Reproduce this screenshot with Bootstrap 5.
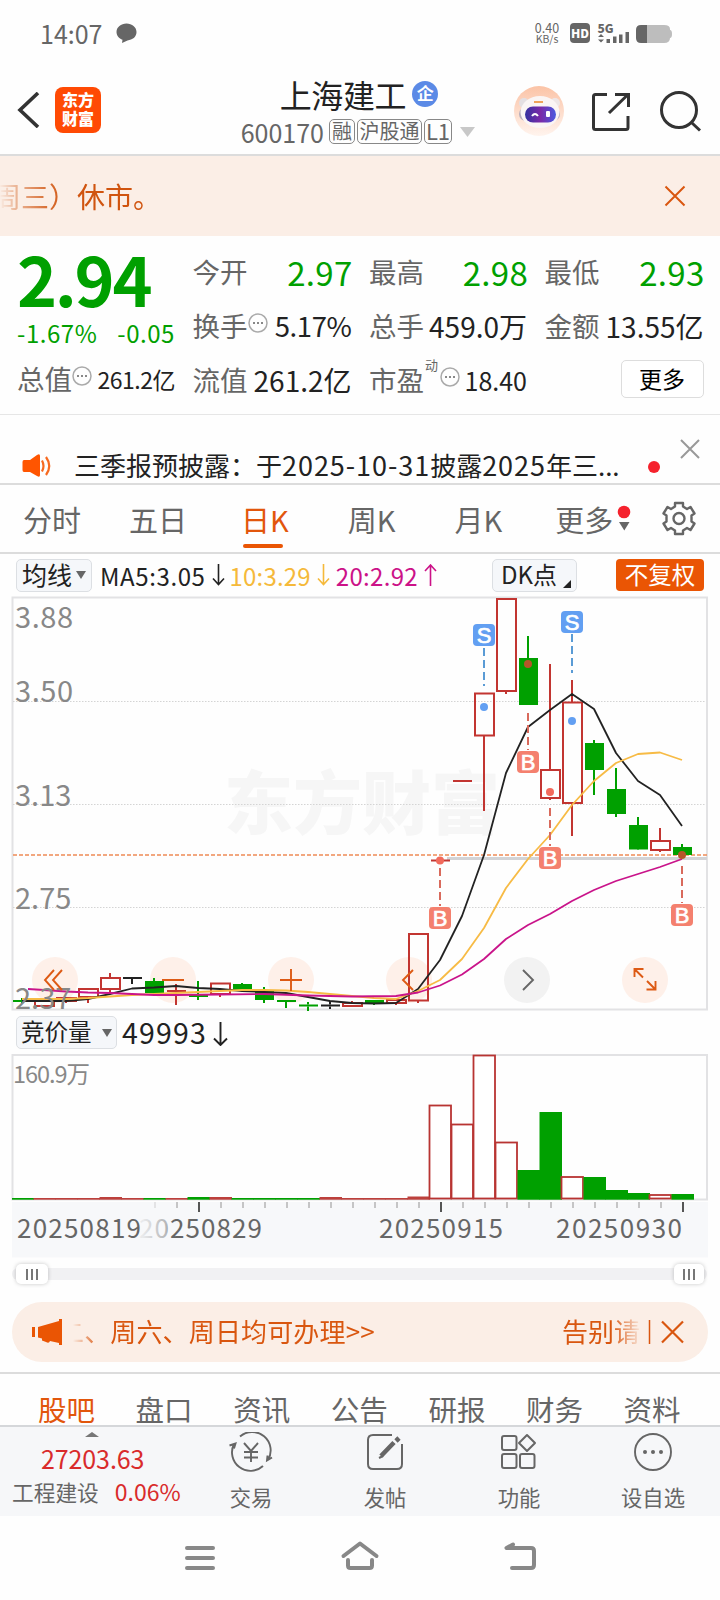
<!DOCTYPE html>
<html lang="zh-CN">
<head>
<meta charset="utf-8">
<meta name="viewport" content="width=device-width, initial-scale=1">
<title>上海建工 600170</title>
<link href="https://cdn.jsdelivr.net/npm/bootstrap@5.3.0/dist/css/bootstrap.min.css" rel="stylesheet">
<style>
body{font-family:"Noto Sans CJK SC",sans-serif;color:#222;width:720px;height:1600px;overflow:hidden;background:#fefefe;line-height:1;font-size:28px}
svg{display:block;flex:none}
svg text{font-family:"Noto Sans CJK SC",sans-serif}
.nw{white-space:nowrap}
.statusbar{height:66px;padding:0 40px 0 40px;color:#666;font-size:25px}
.speed{font-size:12.5px;line-height:11px;width:28px;text-align:center}
.speed div:last-child{font-size:10.5px}
.topbar{height:90px;border-bottom:2px solid #dcdcdc;padding:0 18px 0 17px}
.applogo{width:46px;height:46px;border-radius:8px;background:#ff4a04;color:#fff;font-size:16px;font-weight:900;line-height:19px;margin-left:15px;text-align:center;padding-top:3px}
.stockname{font-size:32px;line-height:36px;letter-spacing:-.4px}
.qi{width:26px;height:26px;border-radius:50%;background:#5b8ae6;color:#fff;font-size:17px;font-weight:700;line-height:24px;text-align:center}
.code{font-size:25px;color:#666;line-height:26px}
.chip{border:1.5px solid #888;border-radius:5px;height:25px;color:#666;font-size:20px;line-height:21px;text-align:center}
.notice{height:80px;background:#fbeee6;color:#d0540f}
.notice .msg{font-size:28px;line-height:40px;margin-left:-7px;-webkit-mask-image:linear-gradient(90deg,transparent 6px,rgba(0,0,0,.35) 22px,rgba(0,0,0,.8) 52px,#000 76px)}
.quote{height:179px;border-bottom:1px solid #e6e6e6;grid-template-columns:158px 159px 158px 159px;column-gap:17.5px;padding:9px 16px 0 17px;display:grid;align-content:start}
.up{color:#d92b2b}.down{color:#00a000}
.price{font-size:68px;font-weight:700;line-height:72px;height:72px;letter-spacing:-2.3px;margin-top:-3px}
.chg{font-size:24px;letter-spacing:.55px;height:38px;padding-left:0}
.lab{color:#666;font-size:27.5px}
.qc{height:54px;display:flex;align-items:center;white-space:nowrap}
.qc>:last-child{margin-left:auto}
.qc>svg{margin-top:-6px}
.v33{font-size:33px;letter-spacing:.3px;margin-right:-1px}
.morebtn{width:83px;height:38px;border:1.5px solid #ddd;border-radius:5px;font-size:23px;margin:-3px 0 0 auto;line-height:31px;text-align:center;background:#fff}
.news{height:70px;border-bottom:2px solid #dcdcdc;font-size:26px;padding-left:22px}
.news .lat{font-size:27px;letter-spacing:.95px}
.dot{width:12px;height:12px;border-radius:50%;background:#f5222d}
.tabs{height:69px;border-bottom:2px solid #dcdcdc;font-size:29px;color:#666;padding-top:1px}
.tabs .it{position:relative}
.tabs .act,.subtabs .act{color:#e2560c}
.tabs .act:after{content:"";position:absolute;left:2px;width:40px;height:4px;border-radius:2px;background:#ea5504;top:39px}
.marow{height:42px;font-size:24px}
.ma{letter-spacing:.6px;padding-top:1px}
.pillbtn{height:33px;border:1.5px solid #dcdfe3;border-radius:5px;background:#f5f7fa;display:flex;align-items:center;white-space:nowrap}
.gold{color:#f5b93a}.mag{color:#cc1288}
.adj{background:#ea5504;color:#fff;width:88px;height:32px;border-radius:4px;text-align:center;line-height:30px;font-size:23.5px}
.promo{height:60px;margin:0 12px;border-radius:30px;background:#fbeee6;color:#d9560f;font-size:26px}
.promo span{line-height:38px;margin-top:-2px}
.fl{-webkit-mask-image:linear-gradient(90deg,transparent 15px,#000 42px)}
.fr{-webkit-mask-image:linear-gradient(90deg,#000 50px,transparent 80px)}
.slider{height:12px;margin:9px 13px 22px 12px;background:#f1f1f3;border-radius:6px;padding:0 3px 0 4px}
.thumb{width:32px;height:20px;background:#fff;border-radius:5px;box-shadow:0 0 4px rgba(0,0,0,.22);display:flex;justify-content:center;align-items:center;gap:3.4px}
.thumb i{width:2px;height:11px;background:#777}
.subtabs{height:55px;border-top:2px solid #dcdcdc;border-bottom:2px solid #d5d7da;overflow:hidden;font-size:28.5px;color:#666;padding:20px 0 0 38px}
.subtabs span{width:97.6px;flex:none;line-height:30px}
.dock{height:89px;background:#f6f7f9;color:#666;font-size:21.3px}
.dock .act{width:134px;padding-top:5px;text-align:center}
.dock .act svg{margin:0 auto 14px}
</style>
</head>
<body>
<header class="statusbar d-flex align-items-center">
 <span>14:07</span>
 <svg style="margin-left:14px" width="21" height="20" viewBox="0 0 21 20"><path d="M10.500 .5c5.500 0 10 3.600 10 8.500s-4 8-9 8.400L6 20l.500-3.200C3 15.500.5 12.500.5 9c0-4.900 4.500-8.500 10-8.500z" fill="#666"/></svg>
 <div class="ms-auto speed"><div>0.40</div><div>KB/s</div></div>
 <svg style="margin-left:7px" width="112" height="22" viewBox="568 22 112 22">
  <rect x="570" y="23" width="20" height="20" rx="4" fill="#666"/><text x="580" y="37.500" font-size="12" font-weight="900" text-anchor="middle" fill="#fff">HD</text>
  <text x="597.500" y="32.500" font-size="12" font-weight="900" fill="#666">5G</text>
  <path d="M601 34l3 3h-6zM601 42.500l3-3h-6z" fill="#666"/>
  <path d="M606.500 39h3.500v4h-3.500zM613 36.500h3.500v6.500H613zM619 34.500h3.500v8.500H619zM625.500 32h3.500v11h-3.500z" fill="#666"/>
  <path d="M642 25h22q6 0 6 4v1q2 0 2 4t-2 4q0 5-6 5h-22z" fill="#bdbdbd"/><path d="M647 25v18h-6q-5 0-5-5v-8q0-5 5-5z" fill="#666"/></svg>
</header>

<nav class="topbar d-flex align-items-center">
 <svg width="23" height="36" viewBox="0 0 23 36"><path d="M21 1L3 18l18 17" fill="none" stroke="#333" stroke-width="3.600"/></svg>
 <div class="applogo">东方<br>财富</div>
 <div class="ms-auto">
  <div class="d-flex align-items-center" style="margin-left:39px"><span class="stockname">上海建工</span><span class="qi" style="margin-left:6px">企</span></div>
  <div class="d-flex align-items-center code" style="margin-top:7px">600170<span class="chip" style="width:26px;margin-left:5px">融</span><span class="chip" style="width:65px;margin-left:2px">沪股通</span><span class="chip" style="width:28px;margin-left:2px;font-size:22px">L1</span>
  <svg style="margin-left:8px" width="15" height="10"><path d="M0 0h15L7.500 10z" fill="#c8c8c8"/></svg></div>
 </div>
 <svg style="margin-left:37px" width="190" height="52" viewBox="512 83 190 52" fill="none" stroke="#333" stroke-width="3">
  <defs><linearGradient id="gb" x1="0" y1="0" x2="0" y2="1"><stop offset="0" stop-color="#fbc3a6"/><stop offset="1" stop-color="#fff4ee"/></linearGradient><linearGradient id="gv"><stop offset="0" stop-color="#3432a0"/><stop offset=".5" stop-color="#7a2aa8"/><stop offset="1" stop-color="#4a5be0"/></linearGradient></defs>
  <g stroke="none"><circle cx="539" cy="110" r="25" fill="url(#gb)"/><circle cx="524" cy="102" r="5" fill="#e4dfe2"/><circle cx="555" cy="102" r="5" fill="#eee6e6"/><rect x="519" y="106" width="41" height="14" rx="7" fill="#b6aebc"/><ellipse cx="540" cy="111" rx="19.500" ry="16" fill="#faf5f4"/><rect x="525" y="105.500" width="31" height="16" rx="8" fill="url(#gv)"/><path d="M534 101h9" stroke="#f0a35a" stroke-width="2"/><path d="M532 115q3-4 6 0" stroke="#fff" stroke-width="2" fill="none"/><rect x="546" y="110" width="4" height="6" rx="1" fill="#fff"/></g>
  <path d="M607 93.500h-11.500q-2 0-2 2v31q0 2 2 2H626q2 0 2-2V115M609 112l19-18.500M615 93.500h13.500V106"/>
  <circle cx="679" cy="109" r="17.500"/><path d="M691 121l9 8.500"/></svg>
</nav>

<div class="notice d-flex align-items-center">
 <span class="msg nw">周三）休市。</span>
 <svg class="ms-auto" style="margin-right:34px" width="22" height="22"><path d="M1.500 1.500l19 19M20.500 1.500l-19 19" stroke="#d9560f" stroke-width="2"/></svg>
</div>

<section class="quote">
 <div>
  <div class="price down">2.94</div>
  <div class="chg down d-flex justify-content-between align-items-center"><span>-1.67%</span><span>-0.05</span></div>
  <div class="qc"><span class="lab">总值</span><svg width="20" height="20" viewBox="0 0 20 20"><circle cx="10" cy="10" r="9" fill="none" stroke="#aaa" stroke-width="1.500"/><path d="M5 10h2M9 10h2M13 10h2" stroke="#888" stroke-width="2"/></svg><span style="font-size:23px;letter-spacing:-.5px">261.2亿</span></div>
 </div>
 <div>
  <div class="qc"><span class="lab">今开</span><span class="v33 down">2.97</span></div>
  <div class="qc"><span class="lab">换手</span><svg width="20" height="20" viewBox="0 0 20 20"><circle cx="10" cy="10" r="9" fill="none" stroke="#aaa" stroke-width="1.500"/><path d="M5 10h2M9 10h2M13 10h2" stroke="#888" stroke-width="2"/></svg><span style="font-size:27.5px;letter-spacing:-.4px">5.17%</span></div>
  <div class="qc"><span class="lab">流值</span><span>261.2亿</span></div>
 </div>
 <div>
  <div class="qc"><span class="lab">最高</span><span class="v33 down">2.98</span></div>
  <div class="qc"><span class="lab">总手</span><span>459.0万</span></div>
  <div class="qc"><span class="lab">市盈</span><span class="lab align-self-start" style="font-size:13px;margin-left:1px;margin-top:5px">动</span><svg style="margin-left:2px" width="20" height="20" viewBox="0 0 20 20"><circle cx="10" cy="10" r="9" fill="none" stroke="#aaa" stroke-width="1.500"/><path d="M5 10h2M9 10h2M13 10h2" stroke="#888" stroke-width="2"/></svg><span style="font-size:25px">18.40</span></div>
 </div>
 <div>
  <div class="qc"><span class="lab">最低</span><span class="v33 down">2.93</span></div>
  <div class="qc"><span class="lab">金额</span><span>13.55亿</span></div>
  <div class="qc"><button class="morebtn p-0">更多</button></div>
 </div>
</section>

<div class="news d-flex">
 <svg style="margin-top:39px" width="30" height="24" viewBox="22 454 30 24"><path d="M24 460h6l7-5q3-2 3 1v19q0 3-3 1l-7-4h-6q-1.500 0-1.500-2v-8q0-2 1.500-2z" fill="#ff5500"/><path d="M42 460.500q3 5.500 0 11M46 457q6.500 9 0 18" fill="none" stroke="#f76a20" stroke-width="2.200"/></svg>
 <span class="nw" style="margin:36px 0 0 22px">三季报预披露：于<span class="lat">2025-10-31</span>披露<span class="lat">2025</span>年三...</span>
 <div class="dot ms-auto" style="margin-top:46px"></div>
 <svg style="margin:24px 20px 0 20px" width="20" height="20"><path d="M1 1l18 18M19 1L1 19" stroke="#999" stroke-width="2"/></svg>
</div>

<nav class="tabs d-flex align-items-center nw">
 <span class="it" style="margin-left:23px">分时</span><span class="it" style="margin-left:48px">五日</span><span class="it act" style="margin-left:54px">日K</span><span class="it" style="margin-left:59px">周K</span><span class="it" style="margin-left:59px">月K</span><span class="it" style="margin-left:53px">更多</span>
 <svg style="margin-left:4px" width="14" height="28" viewBox="617 498 14 28"><circle cx="624" cy="505" r="6.300" fill="#f5222d"/><path d="M619 515h10.500l-5.200 8.500z" fill="#666"/></svg>
 <svg style="margin-left:30px" width="36" height="36" viewBox="-18 -17.500 36 36" fill="none" stroke="#666" stroke-width="2.400" stroke-linejoin="round"><path d="M-4-15.500H4V-12L8-9.500L11.500-11.500L15.500-5L12.500-3V3L15.500 5L11.500 11.500L8 9.500L4 12V15.500H-4V12L-8 9.500L-11.500 11.500L-15.500 5L-12.500 3V-3L-15.500-5L-11.500-11.500L-8-9.500L-4-12z"/><circle r="5.500"/></svg>
</nav>

<div class="marow d-flex align-items-center nw ps-3">
 <div class="pillbtn" style="width:76px;padding-left:5px;font-size:25px"><span style="margin-top:-2px">均线</span><svg class="ms-1" width="10" height="8"><path d="M0 0h10L5 8z" fill="#666"/></svg></div>
 <span class="ma" style="margin-left:8px">MA5:3.05</span>
 <svg style="margin-left:6px" width="13" height="22" viewBox="0 0 13 22"><path d="M6.500 0v20M1 14.500l5.500 6 5.500-6" fill="none" stroke="#222" stroke-width="1.600"/></svg>
 <span class="gold ma" style="margin-left:5px;letter-spacing:.2px">10:3.29</span>
 <svg style="margin-left:6px" width="13" height="22" viewBox="0 0 13 22"><path d="M6.500 0v20M1 14.500l5.500 6 5.500-6" fill="none" stroke="#f5b93a" stroke-width="1.600"/></svg>
 <span class="mag ma" style="margin-left:6px;letter-spacing:.3px">20:2.92</span>
 <svg style="margin-left:6px" width="13" height="22" viewBox="0 0 13 22"><path d="M6.500 22V1M1 7l5.500-6 5.500 6" fill="none" stroke="#cc1288" stroke-width="1.600"/></svg>
 <div class="ms-auto pillbtn" style="width:85px;padding-left:8px"><span style="margin-top:-2px">DK点</span><svg class="align-self-end" style="margin:0 0 3px 6px" width="8" height="8"><path d="M8 0v8H0z" fill="#222"/></svg></div>
 <div class="adj" style="margin:0 16px 0 39px">不复权</div>
</div>

<svg id="kline" width="720" height="416" viewBox="0 596 720 416">
 <text x="224" y="829" font-size="69" font-weight="900" fill="#f6f6f6">东方财富</text>
 <path d="M12.500 1009.500V597.500H707V1009.500z" fill="none" stroke="#e2e2e4" stroke-width="2"/>
 <path d="M13 701.500H706M13 804.500H706M13 907.500H706" stroke="#d4d4d4" stroke-dasharray="1.500 1.500"/>
 <g fill="#fef0e9"><circle cx="55" cy="980" r="23"/><circle cx="173" cy="980" r="23"/><circle cx="291" cy="980" r="23"/><circle cx="409" cy="980" r="23"/><circle cx="645" cy="980" r="23"/><circle cx="527" cy="980" r="23" fill="#f2f2f2"/></g>
 <g font-size="29" fill="#888"><text x="15" y="627.500" textLength="58">3.88</text><text x="15" y="702" textLength="58">3.50</text><text x="15" y="806">3.13</text><text x="15" y="909">2.75</text></g>
 <path d="M447 858.500H707" stroke="#d2d3d6" stroke-width="3"/><path d="M13 855H707" stroke="#ee8a55" stroke-width="1.500" stroke-dasharray="4 2"/>
 <g id="candles"></g>
 <g fill="none" stroke-width="1.800" stroke-linejoin="round">
 <polyline stroke="#222" points="22,1001 66,1001 88,999 110,994 132,988.500 154,987.500 176,986 198,988 220,989 242,991 264,992 286,993 308,997 330,1001 352,1003 374,1003.500 396,1003 418,989 440,960 462,916 484,855 506,773 528,727 550,710 572,694 594,709 616,753 638,781 660,795 682,826"/>
 <polyline stroke="#f7bb45" points="22,999 66,999 88,998 110,996.500 132,995 154,994 198,992 242,990 264,990 286,990.500 308,992 330,994 352,996 374,998 396,999 418,991 440,980 462,959 484,928 506,888 528,859 550,835 572,805 594,781 616,763 638,754 660,752.500 682,760"/>
 <polyline stroke="#c9148a" points="28,989 44,990 66,991.500 88,992.500 110,993 132,994 154,995 176,995 220,994.500 264,994 308,995.500 352,996.500 396,996 418,992.500 440,985.500 462,974.500 484,959 506,939 528,925 550,914 572,901 594,890 616,881 638,874 660,867 682,859"/>
 </g>
 <text x="15" y="1008.500" font-size="29" fill="#888">2.37</text>
 <g id="marks"></g>
 <g fill="none" stroke="#dd5a14" stroke-width="1.900"><path d="M54 970l-9 10 9 10M62 970l-9 10 9 10M162 980h22M280 980h22M291 969v22M413 970l-10 10 10 10M634.500 977v-8h9M635 969.500l8 8M655.500 981v8.500h-9M655 989l-8-8"/><path stroke="#666" d="M523 970l10 10-10 10"/></g>
</svg>

<div class="d-flex align-items-center nw ps-3" style="height:41px;font-size:28.500px">
 <div class="pillbtn" style="width:101px;padding-left:4px;font-size:23.500px"><span style="margin-top:-2px">竞价量</span><svg style="margin-left:10px" width="10" height="8"><path d="M0 0h10L5 8z" fill="#666"/></svg></div>
 <span style="margin:-1px 0 0 5px;letter-spacing:1.200px">49993</span>
 <svg style="margin:2px 0 0 6px" width="15" height="24" viewBox="0 0 15 24"><path d="M7.500 0v23M1 16.500l6.500 6.500 6.500-6.500" fill="none" stroke="#222" stroke-width="1.900"/></svg>
</div>

<svg width="720" height="206" viewBox="0 1053 720 206">
 <defs><linearGradient id="fade" gradientUnits="userSpaceOnUse" x1="143" x2="182" y1="0" y2="0"><stop offset="0" stop-color="#666" stop-opacity=".1"/><stop offset=".6" stop-color="#666" stop-opacity=".45"/><stop offset=".7" stop-color="#666"/></linearGradient></defs>
 <rect x="12" y="1202" width="696" height="55.500" fill="#f7f8fa"/>
 <path d="M12.500 1199.500V1055H707V1199.500z" fill="none" stroke="#e2e2e4" stroke-width="2"/>
 <text x="13" y="1082.500" font-size="23.500" fill="#888" textLength="77">160.9万</text>
 <g id="vol"></g>
 <g font-size="26" fill="#666"><text x="17" y="1237.500" textLength="124">20250819</text><text x="139" y="1237.500" textLength="123" fill="url(#fade)">20250829</text><text x="379" y="1237.500" textLength="124">20250915</text><text x="556" y="1237.500" textLength="126">20250930</text></g>
</svg>

<div class="slider d-flex justify-content-between align-items-center"><div class="thumb"><i></i><i></i><i></i></div><div class="thumb" style="width:30px"><i></i><i></i><i></i></div></div>

<div class="promo d-flex align-items-center nw">
 <svg style="margin-left:20px" width="31" height="28" viewBox="32 1318 31 28"><path d="M32 1327h3v10h-3zM38 1327l21-6v-2h3v26h-3v-2l-9-2q-1 3-4 1l-4-1.500v-2l-4-1z" fill="#ea5504"/></svg>
 <span class="fl" style="margin-left:-5px;letter-spacing:.150px">二、周六、周日均可办理&gt;&gt;</span>
 <span class="fr ms-auto">告别请</span>
 <svg style="margin:0 24px 0 8px" width="36" height="24" viewBox="648 1320 36 24" fill="none" stroke="#d9560f"><path d="M649.500 1320v24" stroke-width="1.500"/><path d="M662 1321.500l21 21M683 1321.500l-21 21" stroke-width="2.200"/></svg>
</div>

<nav class="subtabs d-flex nw" style="margin-top:10px"><span class="act">股吧</span><span>盘口</span><span>资讯</span><span>公告</span><span>研报</span><span>财务</span><span>资料</span></nav>

<div class="dock d-flex">
 <div class="nw" style="width:184px;padding-left:12px">
  <svg style="margin:5px 0 0 73px" width="14" height="5"><path d="M0 5L7 0l7 5z" fill="#777"/></svg>
  <div class="up" style="font-size:25px;margin:9px 0 0 29px;letter-spacing:-.1px">27203.63</div>
  <div class="d-flex align-items-center" style="margin-top:8px;height:25px"><span style="font-size:21.700px">工程建设</span><span class="up" style="margin-left:16px;font-size:23px">0.06%</span></div>
 </div>
 <div class="act"><svg width="44" height="40" viewBox="229 1432 44 40" fill="none" stroke="#666" stroke-width="1.900"><path d="M240 1436.500A18.500 18.500 0 0 1 268 1460M263 1466A18.500 18.500 0 0 1 234 1444M229.500 1445.500l6-2-1.500 5M272 1457.500l-5 3 .5-5M244 1443l7 8 7-8M251 1451v11M244 1452h14M244 1457.500h14"/></svg>交易</div>
 <div class="act"><svg width="40" height="40" viewBox="365 1432 40 40" fill="none" stroke="#666" stroke-width="2"><path d="M392 1435h-19q-5 0-5 5v24q0 5 5 5h24q5 0 5-5v-20"/><path d="M381 1456l13-13.500M396 1441l3-3" stroke-width="4.600"/><path d="M379 1458l4-2" stroke-width="2"/></svg>发帖</div>
 <div class="act"><svg width="40" height="40" viewBox="500 1432 40 40" fill="none" stroke="#666" stroke-width="2"><rect x="503" y="1436" width="14.500" height="14" rx="2"/><rect x="503" y="1454" width="14.500" height="14" rx="2"/><rect x="521" y="1454" width="14.500" height="14" rx="2"/><path d="M528 1435l8 8-8 8-8-8z" stroke-linejoin="round"/></svg>功能</div>
 <div class="act"><svg width="40" height="40" viewBox="633 1432 40 40"><circle cx="653" cy="1452" r="18" fill="none" stroke="#666" stroke-width="1.900"/><circle cx="645" cy="1452" r="2" fill="#666"/><circle cx="653" cy="1452" r="2" fill="#666"/><circle cx="661" cy="1452" r="2" fill="#666"/></svg>设自选</div>
</div>

<footer class="d-flex justify-content-center" style="gap:120px;padding-top:20px">
 <svg width="40" height="44" viewBox="180 1536 40 44"><path d="M187 1548h26M187 1558h26M187 1568h26" stroke="#888" stroke-width="4" stroke-linecap="round"/></svg>
 <svg width="40" height="44" viewBox="340 1536 40 44" fill="none" stroke="#888" stroke-width="4" stroke-linecap="round" stroke-linejoin="round"><path d="M343.500 1556l16.500-12.500 16.500 12.500M348 1560v5.500q0 2.500 2.500 2.500h19q2.500 0 2.500-2.500V1560"/></svg>
 <svg width="40" height="44" viewBox="500 1536 40 44" fill="none" stroke="#888" stroke-width="4" stroke-linecap="round" stroke-linejoin="round"><path d="M513 1544.500l-6.500 3.500H531q3 0 3 3v14q0 3-3 3h-19"/></svg>
</footer>

<script>
const RED='#c23531', GREEN='#00a000', INK='#222';
// centre x, colour, hollow flag, body top, body bottom, wick top, wick bottom
const days=[
[22,GREEN,0,1000,1002,998,1004],[44,RED,1,1001,1006,1000,1006],[66,RED,1,998,1001,997,1003],[88,RED,1,989,997,988,1003],
[110,RED,1,978,989,973,992],[132,INK,0,977,979,978,984],[154,GREEN,0,981,993,978,994],[176,RED,0,990,992,984,1005],
[198,GREEN,0,995,997,981,1000],[220,RED,1,983.5,994,983,997],[242,GREEN,0,984,990,983,991],[264,GREEN,0,990,1000,987,1003],
[286,GREEN,0,1000,1002,1001,1008],[308,GREEN,0,1004.5,1006.5,1002,1011],[330,INK,0,1004.5,1006.5,1001,1009],[352,RED,1,1003,1006,1001,1006],
[374,GREEN,0,1000,1003,1000,1005],[396,RED,1,1000,1003,999,1005],[418,RED,1,934,1000.5,934,1003],[440,RED,0,859.5,861.5,860,861],
[462,RED,0,780,782,781,781],[484,RED,1,693.5,735.5,693,811],[506,RED,1,599,691,599,694],[528,GREEN,0,658,705,636,705],
[550,RED,1,770,798,664,800],[572,RED,1,702.5,803,680,836],[594,GREEN,0,743,770,740,795],[616,GREEN,0,789,814,768,817],
[638,GREEN,0,825,849.5,817,850],[660,RED,1,841,850,828,852],[682,GREEN,0,847,855,844,856]];
document.getElementById('candles').innerHTML=days.map(([x,c,h,t,b,wt,wb])=>
 `<path d="M${x} ${wt}V${t}M${x} ${b}V${wb}" stroke="${c}" stroke-width="2"/>`+
 (h?`<rect x="${x-9}" y="${t}" width="19" height="${b-t}" fill="none" stroke="${c}" stroke-width="2"/>`
   :`<rect x="${x-9}" y="${t}" width="19" height="${b-t}" fill="${c}"/>`)).join('');
// trade marks: x, letter, box top, dot y, dash start, dash end
document.getElementById('marks').innerHTML=[[484,'S',624,707,648,686],[572,'S',611,721,634,673],[440,'B',907,860.5,868,906],
[528,'B',751,664,713,750],[550,'B',847,792,808,846],[682,'B',904,855,866,903]].map(([x,l,y,d,a,b])=>{
 const c=l=='S'?'#629ff2':'#f4806e', s=l=='S'?'#5a9bd5':'#d96a5c', f=l=='S'?c:(x==528||x==682?'#b5562a':'#f26a5c');
 return `<path d="M${x} ${a}V${b}" stroke="${s}" stroke-width="2" stroke-dasharray="8 4"/><circle cx="${x}" cy="${d}" r="4" fill="${f}"/>
 <rect x="${x-11}" y="${y}" width="22" height="22" rx="4" fill="${c}"/><text x="${x}" y="${y+19}" font-size="22" font-weight="500" fill="#fff" stroke="#fff" stroke-width=".7" text-anchor="middle" style="font-family:'Liberation Sans',sans-serif">${l}</text>`}).join('');
// auction volume: colour (r or g), top y
const vol='g1198,r1198,r1198,r1198,r1197,r1198,g1198,r1198,g1197,r1197,g1198,g1198,g1198,g1198,r1197,r1198,r1198,r1198,r1196.5,r1105.5,r1124.5,r1055.5,r1142.5,g1170,g1112,r1177,g1177,g1190,g1193,r1195,g1194'.split(',');
let out='';
vol.forEach((v,i)=>{const x=11.5+i*22,y=+v.slice(1),r=v[0]=='r',x0=Math.max(x,12);
 out+=r&&y<1196?`<rect x="${x}" y="${y}" width="21.5" height="${1198.5-y}" fill="#fff" stroke="#b83432" stroke-width="1.8"/>`
 :`<rect x="${x0}" y="${y}" width="${x+22.5-x0}" height="${1199.7-y}" fill="${r?'#bc403c':GREEN}"/>`;});
for(let i=0;i<25;i++){const m=i==2||i==13||i==24;out+=`<path d="M${155+i*22} 1202v${m?10:6}" stroke="${m?'#555':'#b5b5b5'}" stroke-width="${m?2:1.5}"${i?'':' opacity=".4"'}/>`}
document.getElementById('vol').innerHTML=out;
</script>
<script src="https://cdn.jsdelivr.net/npm/bootstrap@5.3.0/dist/js/bootstrap.bundle.min.js"></script>
</body>
</html>
